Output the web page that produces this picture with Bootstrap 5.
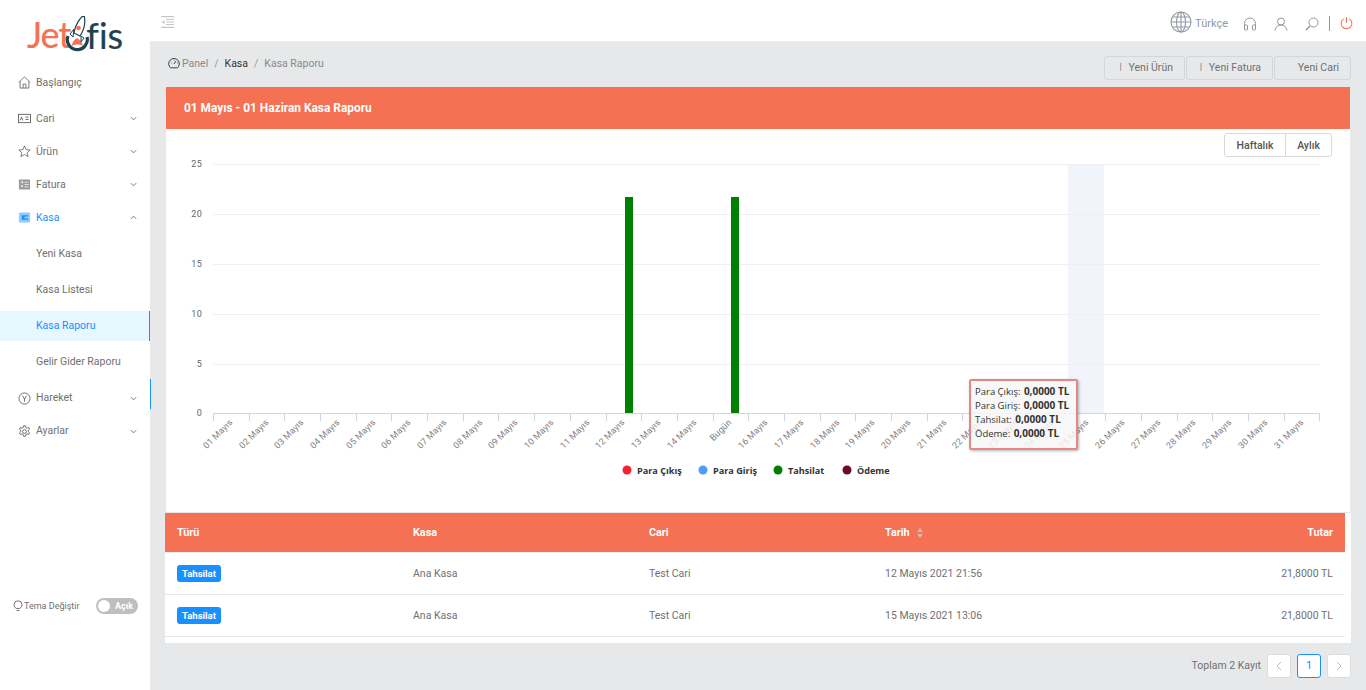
<!DOCTYPE html>
<html lang="tr">
<head>
<meta charset="utf-8">
<title>Kasa Raporu</title>
<link href="https://cdn.jsdelivr.net/npm/bootstrap@5.3.0/dist/css/bootstrap.min.css" rel="stylesheet">
<style>
html,body{height:690px;overflow:hidden}
body{font-family:Roboto,"Liberation Sans",sans-serif;font-size:10.5px;color:#707070;background:#e7e8ea}
.app-shell{height:690px}
.side-panel{width:150px;flex:none;background:#fff;height:690px}
.brand-box{height:61px;padding:0 0 0 27px;font-family:Lato,sans-serif;font-size:36px;line-height:1;-webkit-text-stroke:.2px}
.brand-jet{color:#f47153;letter-spacing:-1px}
.brand-fis{color:#1d4350;font-size:36px;padding-top:1px;position:relative}
.brand-box svg{margin:0 -4px 0 -6px}
.side-link{height:33px;padding:0 13px 0 18px;color:#707070;position:relative}
.side-link svg.side-ico{width:13px;height:13px;margin-right:5px;flex:none}
.side-link .chev{margin-left:auto;width:7px;height:7px}
.first-link{margin:5px 0 3px}
.sub-link{height:30px;margin-top:6px;padding-left:36px;color:#707070;position:relative}
.sub-group{padding:.5px 0 5px 0;margin-top:-2px}
.sub-on{background:#e6f7ff;color:#1890ff;border-right:1px solid #1890ff}
.active-blue{color:#1890ff}
.edge-mark::after{content:"";position:absolute;right:-1px;top:-3px;height:30px;width:1px;background:#1890ff}
.theme-row{margin-top:auto;padding:0 12px 76px 13px;font-size:9px;color:#707070}
.theme-row svg{margin-right:1px}
.theme-label{padding-top:2px}
.theme-switch{width:42px;height:16px;border-radius:8px;background:#bfbfbf;color:#fff;font-size:9px;font-weight:700;line-height:16px;padding:0 5px 0 19px;position:relative;margin-left:auto}
.theme-switch::before{content:"";position:absolute;left:2px;top:2px;width:12px;height:12px;background:#fff;border-radius:50%}
.main-area{flex:1;min-width:0}
.top-bar{height:42px;background:#fff;border-bottom:1px solid #eee;padding:2px 13px 0 11px;flex:none}
.menu-ico{margin-top:1px}
.lang-name{color:#8e99a3;font-size:11px;margin:5px 15px 0 3px}
.top-bar .top-ico{width:14px;height:14px;margin:4px 17px 0 0}
.top-bar .top-ico.last-ico{margin-right:10px}
.top-sep{width:1px;height:15px;background:#8e99a3;margin:3px 10px 0 0}
.power-ico{margin-top:3px}
.page-wrap{padding:14px 15px 0 16px}
.crumb-row{height:23px;margin-bottom:8px}
.breadcrumb{margin:0;font-size:10.5px;--bs-breadcrumb-divider-color:#999;--bs-breadcrumb-item-padding-x:6px;padding-left:2px;margin-top:-8px}
.breadcrumb-item,.breadcrumb-item.active{color:#8a8a8a}
.crumb-mid{color:#333!important}
.crumb-row svg{width:12px;height:12px;margin-right:2px;vertical-align:-2px}
.quick-btn{height:24px;background:#e7e8ea;border:1px solid #d4d5d8;border-radius:3px;font-size:10.5px;color:#707070;padding:0 11px 0 0;line-height:21px;margin-left:1px;white-space:nowrap;text-align:right;--bs-btn-hover-bg:#e7e8ea}
.qb-urun{width:81px}
.qb-fatura{width:87px}
.qb-cari{width:77px}
.quick-mark{margin-right:4px;font-weight:300}
.cash-card{border:0;border-radius:0;width:1184px}
.cash-head{background:#f47153;color:#fff;height:42px;font-weight:700;font-size:11.9px;padding:0 18px;border:0;border-radius:0!important;line-height:42px}
.chart-body{height:384px;position:relative;padding:0;background:#fff;border-bottom:1px solid #e6e6e6}
.chart-svg{display:block;width:1184px;height:383px;font-family:Roboto,sans-serif}
.range-group{position:absolute;top:4px;right:18px;z-index:2}
.range-btn{height:24px;font-size:10.5px;font-weight:500;color:#555;background:#fff;border:1px solid #d9d9d9;border-radius:3px;padding:0;line-height:21px;white-space:nowrap;--bs-btn-hover-bg:#fff}
.range-btn:first-child{width:62px}
.range-btn:last-child{width:47px}
.axis-y{font-size:9px;fill:#666;text-anchor:end;letter-spacing:.3px}
.axis-x{font-size:9px;fill:#808080;text-anchor:end;letter-spacing:.1px}
.legend-t{font-family:"Open Sans",sans-serif;font-size:9.1px;font-weight:700;fill:#333}
.chart-tip{position:absolute;left:803px;top:250px;width:109px;height:71px;background:rgba(247,247,247,.85);border:2px solid #e88585;border-radius:2px;box-shadow:1px 1px 3px rgba(0,0,0,.3);padding:4px 4px;font-family:"Open Sans",sans-serif;font-size:9.5px;line-height:14px;color:#333;white-space:nowrap}
.chart-tip div{height:14px}
.chart-tip b{font-weight:700;font-size:10px;margin-left:1px;line-height:1}
.report-wrap{width:1186px;margin-left:-1px;background:#fff;height:130px}
.report-table{width:1180px;margin:0;font-size:10.5px;table-layout:fixed;color:#707070;--bs-table-color:#707070}
.report-table th{background:#f47153;color:#fff;font-weight:700;height:39px;padding:2px 12px 0;vertical-align:middle;border-bottom:1px solid #eee;font-size:10.8px}
.report-table td{height:42px;padding:1px 12px 0;vertical-align:middle;border-bottom:1px solid #e8e8e8;color:#707070}
.type-tag{background:#1890ff;color:#fff;font-size:9.5px;font-weight:700;padding:0;width:44px;height:17px;line-height:17px;border-radius:3px;display:inline-block;vertical-align:middle}
.sort-mark{display:inline-block;width:8px;height:10px;margin-left:6px;vertical-align:-2px}
.pager-row{height:24px;margin-top:11px;width:1186px;margin-left:-1px;gap:6px;color:#707070;font-size:10.5px}
.pager-row .pagination{margin:0;gap:6px;--bs-pagination-font-size:11px}
.pager-row .page-link{width:24px;height:24px;padding:0;display:flex;align-items:center;justify-content:center;border-radius:3px!important;border:1px solid #ddd;background:#fff;color:#bbb;margin:0!important}
.pager-row .active>.page-link{background:#fff;border-color:#1890ff;color:#1890ff}
</style>
</head>
<body>
<div class="app-shell d-flex">
<aside class="side-panel d-flex flex-column">
  <div class="brand-box d-flex align-items-start pt-3">
    <span class="brand-jet">Jet</span>
    <svg width="26" height="38" viewBox="0 0 26 38" class="flex-none" aria-hidden="true">
      <path d="M4 20a10 10 0 1 0 19 1" fill="none" stroke="#1d4350" stroke-width="3.2"/>
      <path d="M8 30c0-4 2-6 5-8 3 2 5 4 6 8-3-2-8-2-11 0z" fill="#f47153"/>
      <path d="M20 -1c-4 3-9 10-10 18l6 3c4-6 6-13 4-21z" fill="#fff" stroke="#1d4350" stroke-width="1.2"/>
      <path d="M10 13l-4 5 3 3zM17 20l0 6 3-4z" fill="#fff" stroke="#1d4350" stroke-width="1"/>
      <circle cx="14.5" cy="12" r="2.3" fill="#f47153"/>
    </svg>
    <span class="brand-fis">fis</span>
  </div>
  <nav class="d-flex flex-column">
    <a class="side-link first-link d-flex align-items-center text-decoration-none" href="#">
      <svg class="side-ico" viewBox="0 0 14 14" fill="none" stroke="#666" stroke-width=".9"><path d="M.7 7 7 1l6.3 6M2.3 6v7h9.4V6M5.5 13V8.7h3V13"/></svg>Başlangıç</a>
    <a class="side-link d-flex align-items-center text-decoration-none" href="#">
      <svg class="side-ico" viewBox="0 0 14 14" fill="none" stroke="#555" stroke-width=".9"><rect x=".5" y="2.5" width="13" height="9"/><path d="M2.5 9l1.3-3.5L5.1 9M8 5.5h3.5M8 8h3.5"/></svg>Cari
      <svg class="chev" viewBox="0 0 8 8" fill="none" stroke="#666"><path d="M1 2.500l3 3 3-3"/></svg></a>
    <a class="side-link d-flex align-items-center text-decoration-none" href="#">
      <svg class="side-ico" viewBox="0 0 14 14" fill="none" stroke="#666" stroke-width=".9"><path d="M7 1l1.8 4 4.3.4-3.2 2.9 1 4.2L7 10.3 3.100 12.500l1-4.200L.9 5.400 5.200 5z"/></svg>Ürün
      <svg class="chev" viewBox="0 0 8 8" fill="none" stroke="#666"><path d="M1 2.500l3 3 3-3"/></svg></a>
    <a class="side-link d-flex align-items-center text-decoration-none" href="#">
      <svg class="side-ico" viewBox="0 0 14 14"><rect x="1" y="1.500" width="12" height="11" rx="1" fill="#999"/><path d="M3 4.500h3M7 7h4.500M7 4.500h4.500M7 9.500h4.500M3 7.500l2.500 2.500M5.500 7.500 3 10M4.500 3v3" stroke="#fff" stroke-width=".8"/></svg>Fatura
      <svg class="chev" viewBox="0 0 8 8" fill="none" stroke="#666"><path d="M1 2.500l3 3 3-3"/></svg></a>
    <a class="side-link active-blue d-flex align-items-center text-decoration-none" href="#">
      <svg class="side-ico" viewBox="0 0 14 14"><rect x="1" y="1.500" width="12" height="11" rx="1.500" fill="#91caff"/><path d="M11 4.500H4v5h7V8H7V6h4z" fill="#1890ff"/></svg>Kasa
      <svg class="chev" viewBox="0 0 8 8" fill="none" stroke="#666"><path d="M1 5.500l3-3 3 3"/></svg></a>
    <div class="sub-group d-flex flex-column">
      <a class="sub-link d-flex align-items-center text-decoration-none" href="#">Yeni Kasa</a>
      <a class="sub-link d-flex align-items-center text-decoration-none" href="#">Kasa Listesi</a>
      <a class="sub-link sub-on d-flex align-items-center text-decoration-none" href="#">Kasa Raporu</a>
      <a class="sub-link d-flex align-items-center text-decoration-none" href="#">Gelir Gider Raporu</a>
    </div>
    <a class="side-link edge-mark d-flex align-items-center text-decoration-none" href="#">
      <svg class="side-ico" viewBox="0 0 14 14" fill="none" stroke="#555" stroke-width=".9"><circle cx="7" cy="7" r="6"/><path d="M4.800 4 7 7.500 9.200 4M7 7.500V10.500"/></svg>Hareket
      <svg class="chev" viewBox="0 0 8 8" fill="none" stroke="#666"><path d="M1 2.500l3 3 3-3"/></svg></a>
    <a class="side-link d-flex align-items-center text-decoration-none" href="#">
      <svg class="side-ico" viewBox="0 0 14 14" fill="none" stroke="#555" stroke-width=".9"><circle cx="7" cy="7" r="2"/><path d="M6 .8h2l.4 1.900 1.200.7 1.900-.6 1 1.700-1.500 1.300v1.400l1.500 1.300-1 1.700-1.900-.6-1.200.7-.4 1.900H6l-.4-1.900-1.200-.7-1.900.6-1-1.700 1.500-1.300V5.800L1.500 4.500l1-1.700 1.900.6 1.200-.7z"/></svg>Ayarlar
      <svg class="chev" viewBox="0 0 8 8" fill="none" stroke="#666"><path d="M1 2.500l3 3 3-3"/></svg></a>
  </nav>
  <div class="theme-row d-flex align-items-center">
    <svg width="10" height="12" viewBox="0 0 10 12" fill="none" stroke="#666" stroke-width=".9"><path d="M3.200 8.500C2 7.500 1 6.500 1 4.800a4 4 0 0 1 8 0c0 1.700-1 2.700-2.200 3.700zM3.500 10.500h3"/></svg>
    <span class="theme-label">Tema Değiştir</span>
    <div class="theme-switch">Açık</div>
  </div>
</aside>
<div class="main-area d-flex flex-column">
  <header class="top-bar d-flex align-items-center">
    <svg class="menu-ico" width="13" height="12" viewBox="0 0 13 12" stroke="#c4c8cc" stroke-width="1.200"><path d="M0 .6h13M5 3.500h8M5 6h8M5 8.500h8M0 11.400h13"/><path d="M3.500 4v4L.5 6z" fill="#c4c8cc" stroke="none"/></svg>
    <div class="ms-auto d-flex align-items-center">
      <svg width="22" height="22" viewBox="0 0 22 22" fill="none" stroke="#8e99a3" stroke-width="1.100"><circle cx="11" cy="11" r="10"/><ellipse cx="11" cy="11" rx="4.500" ry="10"/><path d="M11 1v20M1 11h20M2.500 6h17M2.500 16h17"/></svg>
      <span class="lang-name">Türkçe</span>
      <svg class="top-ico" viewBox="0 0 14 14" fill="none" stroke="#8e99a3"><path d="M1.500 9V6.500a5.500 5.500 0 0 1 11 0V9"/><rect x="1.500" y="8" width="3" height="5" rx="1"/><rect x="9.500" y="8" width="3" height="5" rx="1"/></svg>
      <svg class="top-ico" viewBox="0 0 14 14" fill="none" stroke="#8e99a3"><circle cx="7" cy="4.500" r="3.500"/><path d="M1 13.500c.5-3.500 3-5.500 6-5.500s5.500 2 6 5.500"/></svg>
      <svg class="top-ico last-ico" viewBox="0 0 14 14" fill="none" stroke="#8e99a3"><circle cx="8.500" cy="5.500" r="4.500"/><path d="M5 9l-4 4" stroke-width="1.500"/></svg>
      <span class="top-sep"></span>
      <svg class="power-ico" width="13" height="14" viewBox="0 0 14 14" fill="none" stroke="#f47153" stroke-width="1.100"><path d="M4 2.500a5.800 5.800 0 1 0 6 0M7 .5V7"/></svg>
    </div>
  </header>
  <main class="page-wrap">
    <div class="crumb-row d-flex align-items-center">
      <ol class="breadcrumb">
        <li class="breadcrumb-item"><svg viewBox="0 0 12 12" fill="none" stroke="#444"><path d="M2.500 10.800a5.300 5.300 0 1 1 7 0z"/><path d="M6 7l2-3M3 6h.6M9 6h.6M6 2.700v.6" /></svg>Panel</li>
        <li class="breadcrumb-item crumb-mid">Kasa</li>
        <li class="breadcrumb-item active" aria-current="page">Kasa Raporu</li>
      </ol>
      <div class="ms-auto d-flex">
        <button class="btn quick-btn qb-urun" type="button"><span class="quick-mark">I</span> Yeni Ürün</button>
        <button class="btn quick-btn qb-fatura" type="button"><span class="quick-mark">I</span> Yeni Fatura</button>
        <button class="btn quick-btn qb-cari" type="button">Yeni Cari</button>
      </div>
    </div>
    <section class="card cash-card">
      <div class="card-header cash-head">01 Mayıs - 01 Haziran Kasa Raporu</div>
      <div class="chart-body">
        <div class="btn-group range-group" role="group">
          <button class="btn range-btn" type="button">Haftalık</button>
          <button class="btn range-btn" type="button">Aylık</button>
        </div>
        <svg class="chart-svg" viewBox="166 129 1184 383">
          <rect x="1068" y="164" width="36" height="249" fill="#f1f4fa"/>
          <g stroke="#efefef"><path d="M213 164.500H1319M213 214.500H1319M213 264.500H1319M213 314.500H1319M213 364.500H1319"/></g>
          <path d="M213 413.500H1319" stroke="#ccd6eb"/>
          <path stroke="#ccd6eb" d="M213.500 413V421M249.500 413V421M284.500 413V421M320.500 413V421M356.500 413V421M391.500 413V421M427.500 413V421M463.500 413V421M498.500 413V421M534.500 413V421M570.500 413V421M606.500 413V421M641.500 413V421M677.500 413V421M713.500 413V421M748.500 413V421M784.500 413V421M820.500 413V421M855.500 413V421M891.500 413V421M927.500 413V421M962.500 413V421M998.500 413V421M1034.500 413V421M1069.500 413V421M1105.500 413V421M1141.500 413V421M1177.500 413V421M1212.500 413V421M1248.500 413V421M1284.500 413V421M1319.500 413V421"/>
          <rect x="625" y="197" width="8" height="216" fill="#008000"/>
          <rect x="731" y="197" width="8" height="216" fill="#008000"/>
          <text class="axis-y" x="202" y="167">25</text><text class="axis-y" x="202" y="217">20</text><text class="axis-y" x="202" y="267">15</text><text class="axis-y" x="202" y="317">10</text><text class="axis-y" x="202" y="367">5</text><text class="axis-y" x="202" y="416">0</text>
          <g class="axis-x" transform="translate(-1 -2)">
            <text transform="translate(234 425) rotate(-45)">01 Mayıs</text>
            <text transform="translate(270 425) rotate(-45)">02 Mayıs</text>
            <text transform="translate(305 425) rotate(-45)">03 Mayıs</text>
            <text transform="translate(341 425) rotate(-45)">04 Mayıs</text>
            <text transform="translate(377 425) rotate(-45)">05 Mayıs</text>
            <text transform="translate(412 425) rotate(-45)">06 Mayıs</text>
            <text transform="translate(448 425) rotate(-45)">07 Mayıs</text>
            <text transform="translate(484 425) rotate(-45)">08 Mayıs</text>
            <text transform="translate(519 425) rotate(-45)">09 Mayıs</text>
            <text transform="translate(555 425) rotate(-45)">10 Mayıs</text>
            <text transform="translate(591 425) rotate(-45)">11 Mayıs</text>
            <text transform="translate(626 425) rotate(-45)">12 Mayıs</text>
            <text transform="translate(662 425) rotate(-45)">13 Mayıs</text>
            <text transform="translate(698 425) rotate(-45)">14 Mayıs</text>
            <text transform="translate(733 425) rotate(-45)">Bugün</text>
            <text transform="translate(769 425) rotate(-45)">16 Mayıs</text>
            <text transform="translate(805 425) rotate(-45)">17 Mayıs</text>
            <text transform="translate(841 425) rotate(-45)">18 Mayıs</text>
            <text transform="translate(876 425) rotate(-45)">19 Mayıs</text>
            <text transform="translate(912 425) rotate(-45)">20 Mayıs</text>
            <text transform="translate(948 425) rotate(-45)">21 Mayıs</text>
            <text transform="translate(983 425) rotate(-45)">22 Mayıs</text>
            <text transform="translate(1019 425) rotate(-45)">23 Mayıs</text>
            <text transform="translate(1055 425) rotate(-45)">24 Mayıs</text>
            <text transform="translate(1090 425) rotate(-45)">25 Mayıs</text>
            <text transform="translate(1126 425) rotate(-45)">26 Mayıs</text>
            <text transform="translate(1162 425) rotate(-45)">27 Mayıs</text>
            <text transform="translate(1197 425) rotate(-45)">28 Mayıs</text>
            <text transform="translate(1233 425) rotate(-45)">29 Mayıs</text>
            <text transform="translate(1269 425) rotate(-45)">30 Mayıs</text>
            <text transform="translate(1305 425) rotate(-45)">31 Mayıs</text>
          </g>
          <circle cx="627" cy="470" r="4.500" fill="#f5222d"/><text class="legend-t" x="637" y="474">Para Çıkış</text>
          <circle cx="703" cy="470" r="4.500" fill="#4c9dfb"/><text class="legend-t" x="713" y="474">Para Giriş</text>
          <circle cx="778" cy="470" r="4.500" fill="#008000"/><text class="legend-t" x="788" y="474">Tahsilat</text>
          <circle cx="847" cy="470" r="4.500" fill="#6b0a2c"/><text class="legend-t" x="857" y="474">Ödeme</text>
        </svg>
        <div class="chart-tip">
          <div>Para Çıkış: <b>0,0000 TL</b></div>
          <div>Para Giriş: <b>0,0000 TL</b></div>
          <div>Tahsilat: <b>0,0000 TL</b></div>
          <div>Ödeme: <b>0,0000 TL</b></div>
        </div>
      </div>
    </section>
    <div class="report-wrap">
      <table class="table report-table">
        <thead>
          <tr><th>Türü</th><th>Kasa</th><th>Cari</th><th>Tarih<svg class="sort-mark" viewBox="0 0 8 10" fill="#d9b9b0"><path d="M4 0l3 4H1zM4 10 1 6h6z"/></svg></th><th class="text-end">Tutar</th></tr>
        </thead>
        <tbody>
          <tr><td><span class="type-tag text-center">Tahsilat</span></td><td>Ana Kasa</td><td>Test Cari</td><td>12 Mayıs 2021 21:56</td><td class="text-end">21,8000 TL</td></tr>
          <tr><td><span class="type-tag text-center">Tahsilat</span></td><td>Ana Kasa</td><td>Test Cari</td><td>15 Mayıs 2021 13:06</td><td class="text-end">21,8000 TL</td></tr>
        </tbody>
      </table>
    </div>
    <div class="pager-row d-flex align-items-center justify-content-end">
      <span>Toplam 2 Kayıt</span>
      <ul class="pagination">
        <li class="page-item"><a class="page-link" href="#" aria-label="Önceki"><svg width="8" height="10" viewBox="0 0 8 10" fill="none" stroke="#bbb"><path d="M6 1 2 5l4 4"/></svg></a></li>
        <li class="page-item active"><a class="page-link" href="#">1</a></li>
        <li class="page-item"><a class="page-link" href="#" aria-label="Sonraki"><svg width="8" height="10" viewBox="0 0 8 10" fill="none" stroke="#bbb"><path d="M2 1l4 4-4 4"/></svg></a></li>
      </ul>
    </div>
  </main>
</div>
</div>
<script src="https://cdn.jsdelivr.net/npm/bootstrap@5.3.0/dist/js/bootstrap.bundle.min.js"></script>
</body>
</html>
